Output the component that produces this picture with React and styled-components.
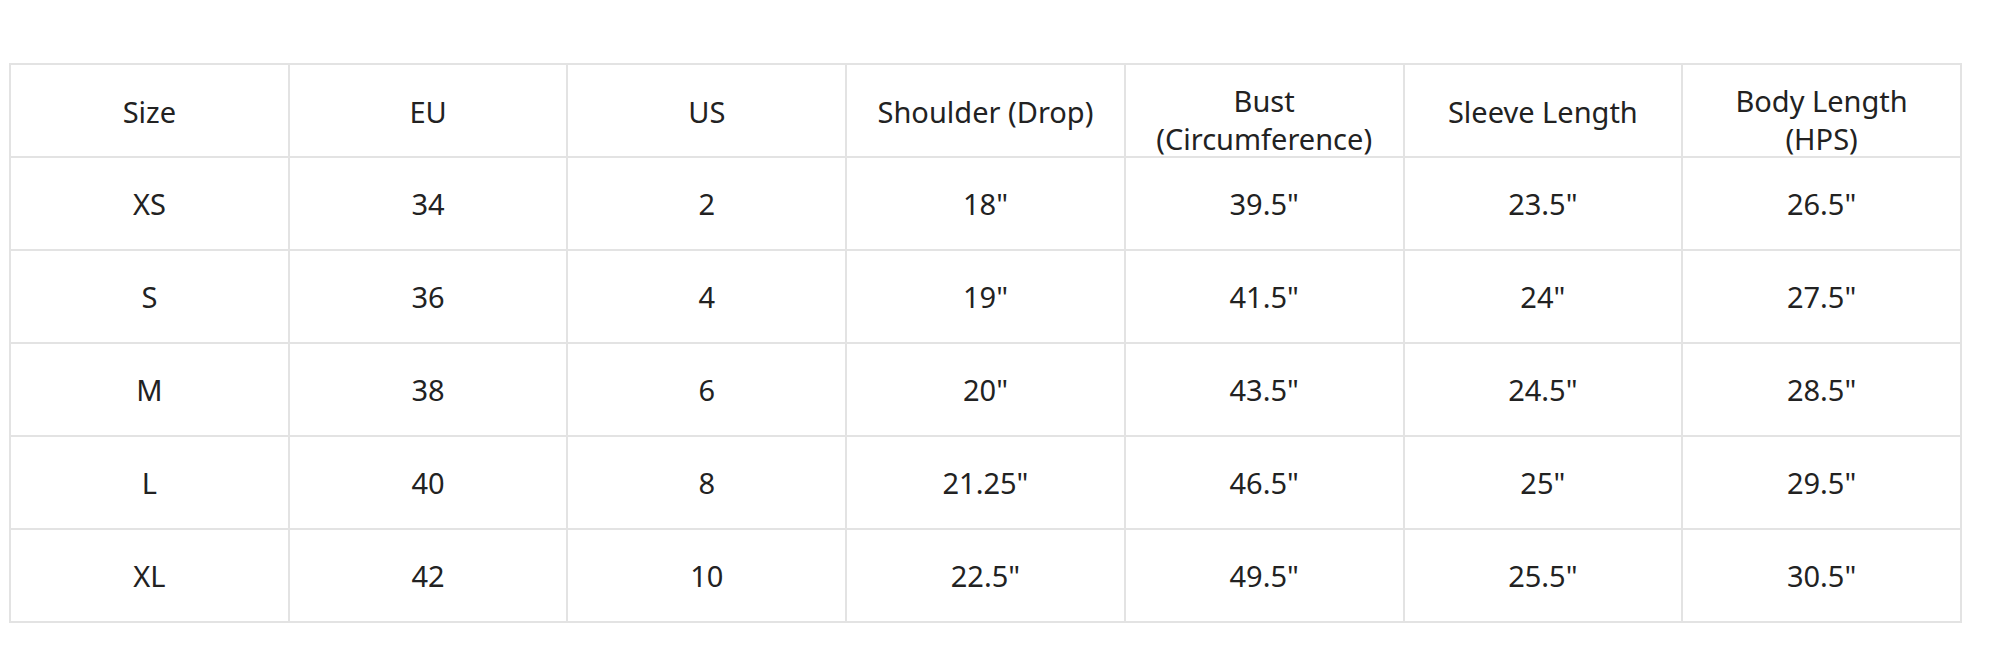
import React from "react";
import styled, { createGlobalStyle } from "styled-components";

const headers = [
  ["Size"],
  ["EU"],
  ["US"],
  ["Shoulder (Drop)"],
  ["Bust", "(Circumference)"],
  ["Sleeve Length"],
  ["Body Length", "(HPS)"],
];

const rows = [
  ["XS", "34", "2", '18"', '39.5"', '23.5"', '26.5"'],
  ["S", "36", "4", '19"', '41.5"', '24"', '27.5"'],
  ["M", "38", "6", '20"', '43.5"', '24.5"', '28.5"'],
  ["L", "40", "8", '21.25"', '46.5"', '25"', '29.5"'],
  ["XL", "42", "10", '22.5"', '49.5"', '25.5"', '30.5"'],
];

const App = () => {
  return (
    <>
      <GlobalStyle />
      <Page>
        <Table>
          <thead>
            <Row>
              {headers.map((lines) => (
                <HeadCell key={lines[0]}>
                  <Label $split={lines.length > 1}>
                    {lines.map((l, i) => (
                      <React.Fragment key={l}>
                        {i > 0 && <br />}
                        {l}
                      </React.Fragment>
                    ))}
                  </Label>
                </HeadCell>
              ))}
            </Row>
          </thead>
          <tbody>
            {rows.map((r) => (
              <Row key={r[0]}>
                {r.map((v, i) => (
                  <Cell key={i}>{v}</Cell>
                ))}
              </Row>
            ))}
          </tbody>
        </Table>
      </Page>
    </>
  );
};

export default App;

const GlobalStyle = createGlobalStyle`
  html, body {
    margin: 0;
    padding: 0;
    background: #ffffff;
  }
  body {
    font-family: "Noto Sans", "Open Sans", sans-serif;
  }
`;

const Page = styled.div`
  width: 1992px;
  height: 662px;
  padding: 63px 0 0 9px;
  box-sizing: border-box;
`;

const Table = styled.table`
  width: 1953px;
  border-collapse: collapse;
  table-layout: fixed;
  border: 2px solid #e3e3e3;
  color: #222222;
  font-size: 29px;
`;

const Row = styled.tr`
  height: 93px;
`;

const Cell = styled.td`
  border: 2px solid #e3e3e3;
  text-align: center;
  vertical-align: middle;
  padding: 0 12px;
  line-height: 38px;
  font-weight: 400;
  white-space: nowrap;
`;

const HeadCell = styled(Cell).attrs({ as: "th" })`
  font-weight: 400;
  padding-top: 2px;
`;

const Label = styled.div`
  margin-bottom: ${(p) => (p.$split ? "-17px" : "0")};
`;
